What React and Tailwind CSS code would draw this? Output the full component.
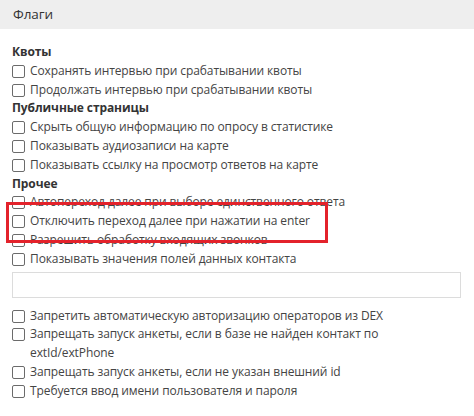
import React from "react";

function Box() {
  return (
    <span className="mt-[3px] mr-[5px] h-[13px] w-[13px] shrink-0 rounded-[2px] border border-[#6b6b6b] bg-white" />
  );
}

function Row({ children }) {
  return (
    <label className="flex items-start">
      <Box />
      <span>{children}</span>
    </label>
  );
}

function Title({ children }) {
  return <div className="font-bold text-[#333]">{children}</div>;
}

export default function App() {
  return (
    <div
      className="relative h-[416px] w-[474px] overflow-hidden bg-white text-[12px] leading-[18.8px] tracking-[-0.1px] text-[#444]"
      style={{ fontFamily: '"Open Sans", "Noto Sans", sans-serif' }}
    >
      <div className="flex h-[29px] items-center bg-[#eeeeee] px-[13px] text-[13.5px] text-[#333]">
        Флаги
      </div>

      <div className="px-[12px] pt-[14px]">
        <Title>Квоты</Title>
        <Row>Сохранять интервью при срабатывании квоты</Row>
        <Row>Продолжать интервью при срабатывании квоты</Row>
        <Title>Публичные страницы</Title>
        <Row>Скрыть общую информацию по опросу в статистике</Row>
        <Row>Показывать аудиозаписи на карте</Row>
        <Row>Показывать ссылку на просмотр ответов на карте</Row>
        <Title>Прочее</Title>
        <Row>Автопереход далее при выборе единственного ответа</Row>
        <Row>Отключить переход далее при нажатии на enter</Row>
        <Row>Разрешить обработку входящих звонков</Row>
        <Row>Показывать значения полей данных контакта</Row>
        <div className="mb-[9px] mt-[3px] h-[26px] w-[449px] border border-[#dcdcdc] bg-white" />
        <Row>Запретить автоматическую авторизацию операторов из DEX</Row>
        <Row>
          Запрещать запуск анкеты, если в базе не найден контакт по
          <br />
          extId/extPhone
        </Row>
        <Row>Запрещать запуск анкеты, если не указан внешний id</Row>
        <Row>Требуется ввод имени пользователя и пароля</Row>
      </div>

      <div className="pointer-events-none absolute left-[6px] top-[202px] h-[41px] w-[322px] border-[3px] border-[#e3222b]" />
    </div>
  );
}
